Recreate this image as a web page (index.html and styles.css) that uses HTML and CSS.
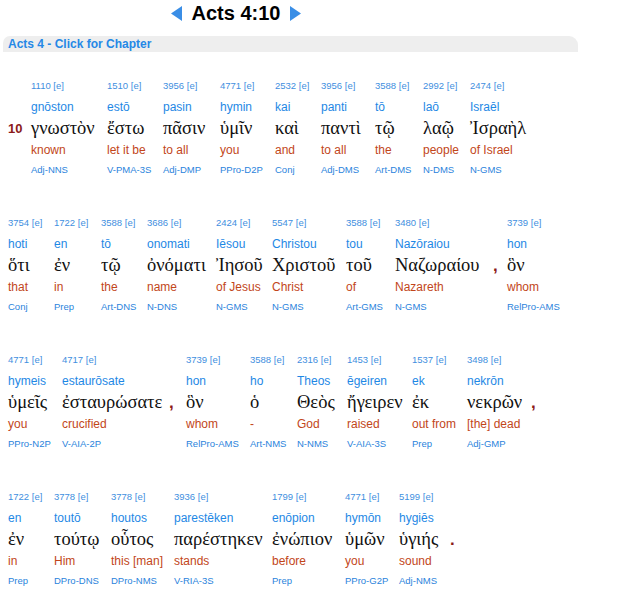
FILE: index.html
```html
<!DOCTYPE html>
<html lang="en">
<head>
<meta charset="utf-8">
<title>Acts 4:10 Interlinear</title>
<link rel="stylesheet" href="styles.css">
</head>
<body>
<header class="top">
  <a class="nav" href="#"><svg width="11" height="15" viewBox="0 0 11 15"><polygon points="11,0 11,15 0,7.5" fill="#3a8ee6"/></svg></a>
  <h1 class="title">Acts 4:10</h1>
  <a class="nav" href="#"><svg width="11" height="15" viewBox="0 0 11 15"><polygon points="0,0 0,15 11,7.5" fill="#3a8ee6"/></svg></a>
</header>
<div class="chap">Acts 4 - Click for Chapter</div>

<div class="row r1">
  <div class="vnum">10</div>
  <div class="w"><span class="num">1110 [e]</span><span class="tr">gnōston</span><span class="gk">γνωστὸν</span><span class="en">known</span><span class="ps">Adj-NNS</span></div>
  <div class="w"><span class="num">1510 [e]</span><span class="tr">estō</span><span class="gk">ἔστω</span><span class="en">let it be</span><span class="ps">V-PMA-3S</span></div>
  <div class="w"><span class="num">3956 [e]</span><span class="tr">pasin</span><span class="gk">πᾶσιν</span><span class="en">to all</span><span class="ps">Adj-DMP</span></div>
  <div class="w"><span class="num">4771 [e]</span><span class="tr">hymin</span><span class="gk">ὑμῖν</span><span class="en">you</span><span class="ps">PPro-D2P</span></div>
  <div class="w"><span class="num">2532 [e]</span><span class="tr">kai</span><span class="gk">καὶ</span><span class="en">and</span><span class="ps">Conj</span></div>
  <div class="w"><span class="num">3956 [e]</span><span class="tr">panti</span><span class="gk">παντὶ</span><span class="en">to all</span><span class="ps">Adj-DMS</span></div>
  <div class="w"><span class="num">3588 [e]</span><span class="tr">tō</span><span class="gk">τῷ</span><span class="en">the</span><span class="ps">Art-DMS</span></div>
  <div class="w"><span class="num">2992 [e]</span><span class="tr">laō</span><span class="gk">λαῷ</span><span class="en">people</span><span class="ps">N-DMS</span></div>
  <div class="w"><span class="num">2474 [e]</span><span class="tr">Israēl</span><span class="gk">Ἰσραὴλ</span><span class="en">of Israel</span><span class="ps">N-GMS</span></div>
</div>

<div class="row r2">
  <div class="w"><span class="num">3754 [e]</span><span class="tr">hoti</span><span class="gk">ὅτι</span><span class="en">that</span><span class="ps">Conj</span></div>
  <div class="w"><span class="num">1722 [e]</span><span class="tr">en</span><span class="gk">ἐν</span><span class="en">in</span><span class="ps">Prep</span></div>
  <div class="w"><span class="num">3588 [e]</span><span class="tr">tō</span><span class="gk">τῷ</span><span class="en">the</span><span class="ps">Art-DNS</span></div>
  <div class="w"><span class="num">3686 [e]</span><span class="tr">onomati</span><span class="gk">ὀνόματι</span><span class="en">name</span><span class="ps">N-DNS</span></div>
  <div class="w"><span class="num">2424 [e]</span><span class="tr">Iēsou</span><span class="gk">Ἰησοῦ</span><span class="en">of Jesus</span><span class="ps">N-GMS</span></div>
  <div class="w"><span class="num">5547 [e]</span><span class="tr">Christou</span><span class="gk">Χριστοῦ</span><span class="en">Christ</span><span class="ps">N-GMS</span></div>
  <div class="w"><span class="num">3588 [e]</span><span class="tr">tou</span><span class="gk">τοῦ</span><span class="en">of</span><span class="ps">Art-GMS</span></div>
  <div class="w"><span class="num">3480 [e]</span><span class="tr">Nazōraiou</span><span class="gk">Ναζωραίου</span><span class="en">Nazareth</span><span class="ps">N-GMS</span></div>
  <div class="punct">,</div>
  <div class="w"><span class="num">3739 [e]</span><span class="tr">hon</span><span class="gk">ὃν</span><span class="en">whom</span><span class="ps">RelPro-AMS</span></div>
</div>

<div class="row r3">
  <div class="w"><span class="num">4771 [e]</span><span class="tr">hymeis</span><span class="gk">ὑμεῖς</span><span class="en">you</span><span class="ps">PPro-N2P</span></div>
  <div class="w"><span class="num">4717 [e]</span><span class="tr">estaurōsate</span><span class="gk">ἐσταυρώσατε</span><span class="en">crucified</span><span class="ps">V-AIA-2P</span></div>
  <div class="punct">,</div>
  <div class="w"><span class="num">3739 [e]</span><span class="tr">hon</span><span class="gk">ὃν</span><span class="en">whom</span><span class="ps">RelPro-AMS</span></div>
  <div class="w"><span class="num">3588 [e]</span><span class="tr">ho</span><span class="gk">ὁ</span><span class="en">-</span><span class="ps">Art-NMS</span></div>
  <div class="w"><span class="num">2316 [e]</span><span class="tr">Theos</span><span class="gk">Θεὸς</span><span class="en">God</span><span class="ps">N-NMS</span></div>
  <div class="w"><span class="num">1453 [e]</span><span class="tr">ēgeiren</span><span class="gk">ἤγειρεν</span><span class="en">raised</span><span class="ps">V-AIA-3S</span></div>
  <div class="w"><span class="num">1537 [e]</span><span class="tr">ek</span><span class="gk">ἐκ</span><span class="en">out from</span><span class="ps">Prep</span></div>
  <div class="w"><span class="num">3498 [e]</span><span class="tr">nekrōn</span><span class="gk">νεκρῶν</span><span class="en">[the] dead</span><span class="ps">Adj-GMP</span></div>
  <div class="punct">,</div>
</div>

<div class="row r4">
  <div class="w"><span class="num">1722 [e]</span><span class="tr">en</span><span class="gk">ἐν</span><span class="en">in</span><span class="ps">Prep</span></div>
  <div class="w"><span class="num">3778 [e]</span><span class="tr">toutō</span><span class="gk">τούτῳ</span><span class="en">Him</span><span class="ps">DPro-DNS</span></div>
  <div class="w"><span class="num">3778 [e]</span><span class="tr">houtos</span><span class="gk">οὗτος</span><span class="en">this [man]</span><span class="ps">DPro-NMS</span></div>
  <div class="w"><span class="num">3936 [e]</span><span class="tr">parestēken</span><span class="gk">παρέστηκεν</span><span class="en">stands</span><span class="ps">V-RIA-3S</span></div>
  <div class="w"><span class="num">1799 [e]</span><span class="tr">enōpion</span><span class="gk">ἐνώπιον</span><span class="en">before</span><span class="ps">Prep</span></div>
  <div class="w"><span class="num">4771 [e]</span><span class="tr">hymōn</span><span class="gk">ὑμῶν</span><span class="en">you</span><span class="ps">PPro-G2P</span></div>
  <div class="w"><span class="num">5199 [e]</span><span class="tr">hygiēs</span><span class="gk">ὑγιής</span><span class="en">sound</span><span class="ps">Adj-NMS</span></div>
  <div class="punct">.</div>
</div>
</body>
</html>
```

FILE: styles.css
```css
html, body {
  margin: 0;
  padding: 0;
  background: #ffffff;
}

body {
  font-family: "Liberation Sans", Arial, sans-serif;
  width: 640px;
}

.top {
  width: 472px;
  height: 26px;
  display: flex;
  justify-content: center;
  align-items: center;
  gap: 10px;
  margin-bottom: 10px;
}

.nav {
  display: flex;
  align-items: center;
  text-decoration: none;
}

.title {
  margin: 0;
  font-size: 20px;
  line-height: 26px;
  font-weight: bold;
  color: #000;
}

.chap {
  margin-left: 3px;
  width: 570px;
  height: 16px;
  line-height: 16px;
  padding-left: 5px;
  background: #eeeeee;
  border-radius: 7px 9px 0 0;
  font-size: 12px;
  font-weight: bold;
  color: #2588e6;
  margin-bottom: 24px;
}

.row {
  display: grid;
  margin-left: 8px;
  height: 103px;
  margin-bottom: 34px;
}

.row:last-child {
  margin-bottom: 0;
}

.r1 { grid-template-columns: 23px 76px 56px 57px 55px 46px 54px 48px 47px auto; }
.r2 { grid-template-columns: 46px 47px 46px 69px 56px 74px 49px 98px 14px auto; }
.r3 { grid-template-columns: 54px 107px 17px 64px 47px 50px 65px 55px 64px auto; }
.r4 { grid-template-columns: 46px 57px 63px 98px 73px 54px 51px auto; }

.w {
  display: flex;
  flex-direction: column;
  white-space: nowrap;
}

.num {
  font-size: 9.5px;
  line-height: 20px;
  color: #3f8fe0;
}

.tr {
  font-size: 12px;
  line-height: 22px;
  color: #1e88e5;
}

.gk {
  font-family: "Liberation Serif", "DejaVu Serif", serif;
  font-size: 18.5px;
  line-height: 21px;
  color: #111;
}

.en {
  font-size: 12px;
  line-height: 22px;
  color: #c2461a;
}

.ps {
  font-size: 9.5px;
  line-height: 18px;
  color: #2a83dc;
}

.vnum {
  padding-top: 42px;
  line-height: 21px;
  font-size: 13px;
  font-weight: bold;
  color: #8b1a1a;
}

.punct {
  padding-top: 42px;
  line-height: 21px;
  font-size: 17px;
  font-weight: bold;
  color: #8b1a1a;
}
```
